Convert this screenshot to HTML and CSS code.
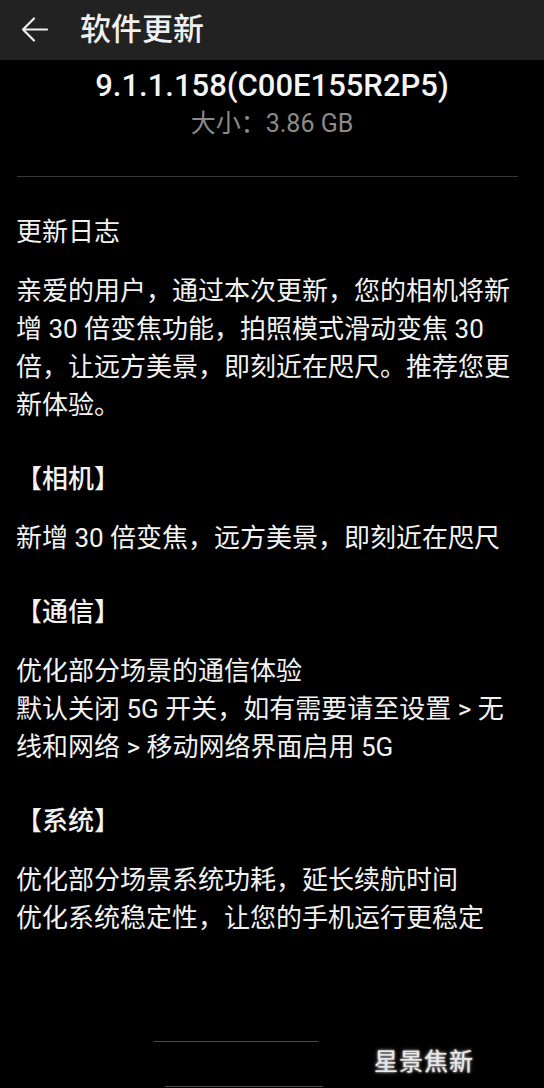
FILE: index.html
```html
<!DOCTYPE html>
<html lang="zh-CN">
<head>
<meta charset="utf-8">
<link rel="stylesheet" href="styles.css">
</head>
<body>
<div class="page">
  <header class="topbar">
    <svg class="back" width="30" height="30" viewBox="0 0 30 30">
      <path d="M27 14.5H3.5M14 3.5L3 14.5L14 25.5" fill="none" stroke="#ededed" stroke-width="2.2" stroke-linecap="round" stroke-linejoin="round"/>
    </svg>
    <span class="title">软件更新</span>
  </header>
  <section class="version">
    <div class="ver">9.1.1.158(C00E155R2P5)</div>
    <div class="size">大小：3.86 GB</div>
  </section>
  <div class="divider"></div>
  <main class="content">
    <h2 class="log-title">更新日志</h2>
    <p class="para">亲爱的用户，通过本次更新，您的相机将新<br>增 30 倍变焦功能，拍照模式滑动变焦 30<br>倍，让远方美景，即刻近在咫尺。推荐您更<br>新体验。</p>
    <h3 class="sec">【相机】</h3>
    <p class="para">新增 30 倍变焦，远方美景，即刻近在咫尺</p>
    <h3 class="sec">【通信】</h3>
    <p class="para">优化部分场景的通信体验<br>默认关闭 5G 开关，如有需要请至设置 &gt; 无<br>线和网络 &gt; 移动网络界面启用 5G</p>
    <h3 class="sec">【系统】</h3>
    <p class="para">优化部分场景系统功耗，延长续航时间<br>优化系统稳定性，让您的手机运行更稳定</p>
  </main>
  <footer class="foot">
    <div class="fline fline1"></div>
    <div class="fline fline2"></div>
    <span class="mark">星景焦新</span>
  </footer>
</div>
</body>
</html>
```
FILE: styles.css
```css
html, body {
  margin: 0;
  padding: 0;
  background: #000;
}
.page {
  width: 544px;
  height: 1088px;
  overflow: hidden;
  position: relative;
  background: #000;
  color: #f2f2f2;
  font-family: Roboto, "Noto Sans CJK SC", sans-serif;
}
.topbar {
  height: 60px;
  background: #222222;
  display: flex;
  align-items: center;
}
.back {
  margin-left: 20px;
  flex: none;
}
.title {
  margin-left: 30px;
  font-size: 31px;
  line-height: 40px;
  font-weight: 500;
  color: #f0f0f0;
}
.version {
  text-align: center;
  padding-top: 6px;
}
.ver {
  font-size: 31px;
  line-height: 40px;
  font-weight: 500;
  color: #f4f4f4;
}
.size {
  font-size: 25px;
  line-height: 36px;
  color: #8a8a8a;
}
.divider {
  height: 1px;
  background: #383838;
  margin: 34px 26px 0 17px;
}
.content {
  padding: 0 10px 0 16px;
}
.log-title, .sec, .para {
  font-size: 26px;
  line-height: 38px;
  font-weight: 400;
  margin: 0;
  color: #f2f2f2;
}
.sec {
  font-weight: 500;
}
.log-title {
  margin-top: 36px;
}
.sec {
  margin-top: 36px;
}
.para {
  margin-top: 21px;
}
.foot {
  position: absolute;
  left: 0;
  right: 0;
  bottom: 0;
  height: 58px;
}
.fline {
  height: 1px;
  background: #4a4a4a;
}
.fline1 {
  margin: 11px 0 0 154px;
  width: 164px;
}
.fline2 {
  margin: 44px 0 0 165px;
  width: 158px;
}
.mark {
  position: absolute;
  right: 70px;
  bottom: 12px;
  font-size: 24px;
  line-height: 28px;
  color: #e8e8e8;
  letter-spacing: 1px;
  text-shadow: 0 0 2px #fff, 0 0 4px #888;
}
```
